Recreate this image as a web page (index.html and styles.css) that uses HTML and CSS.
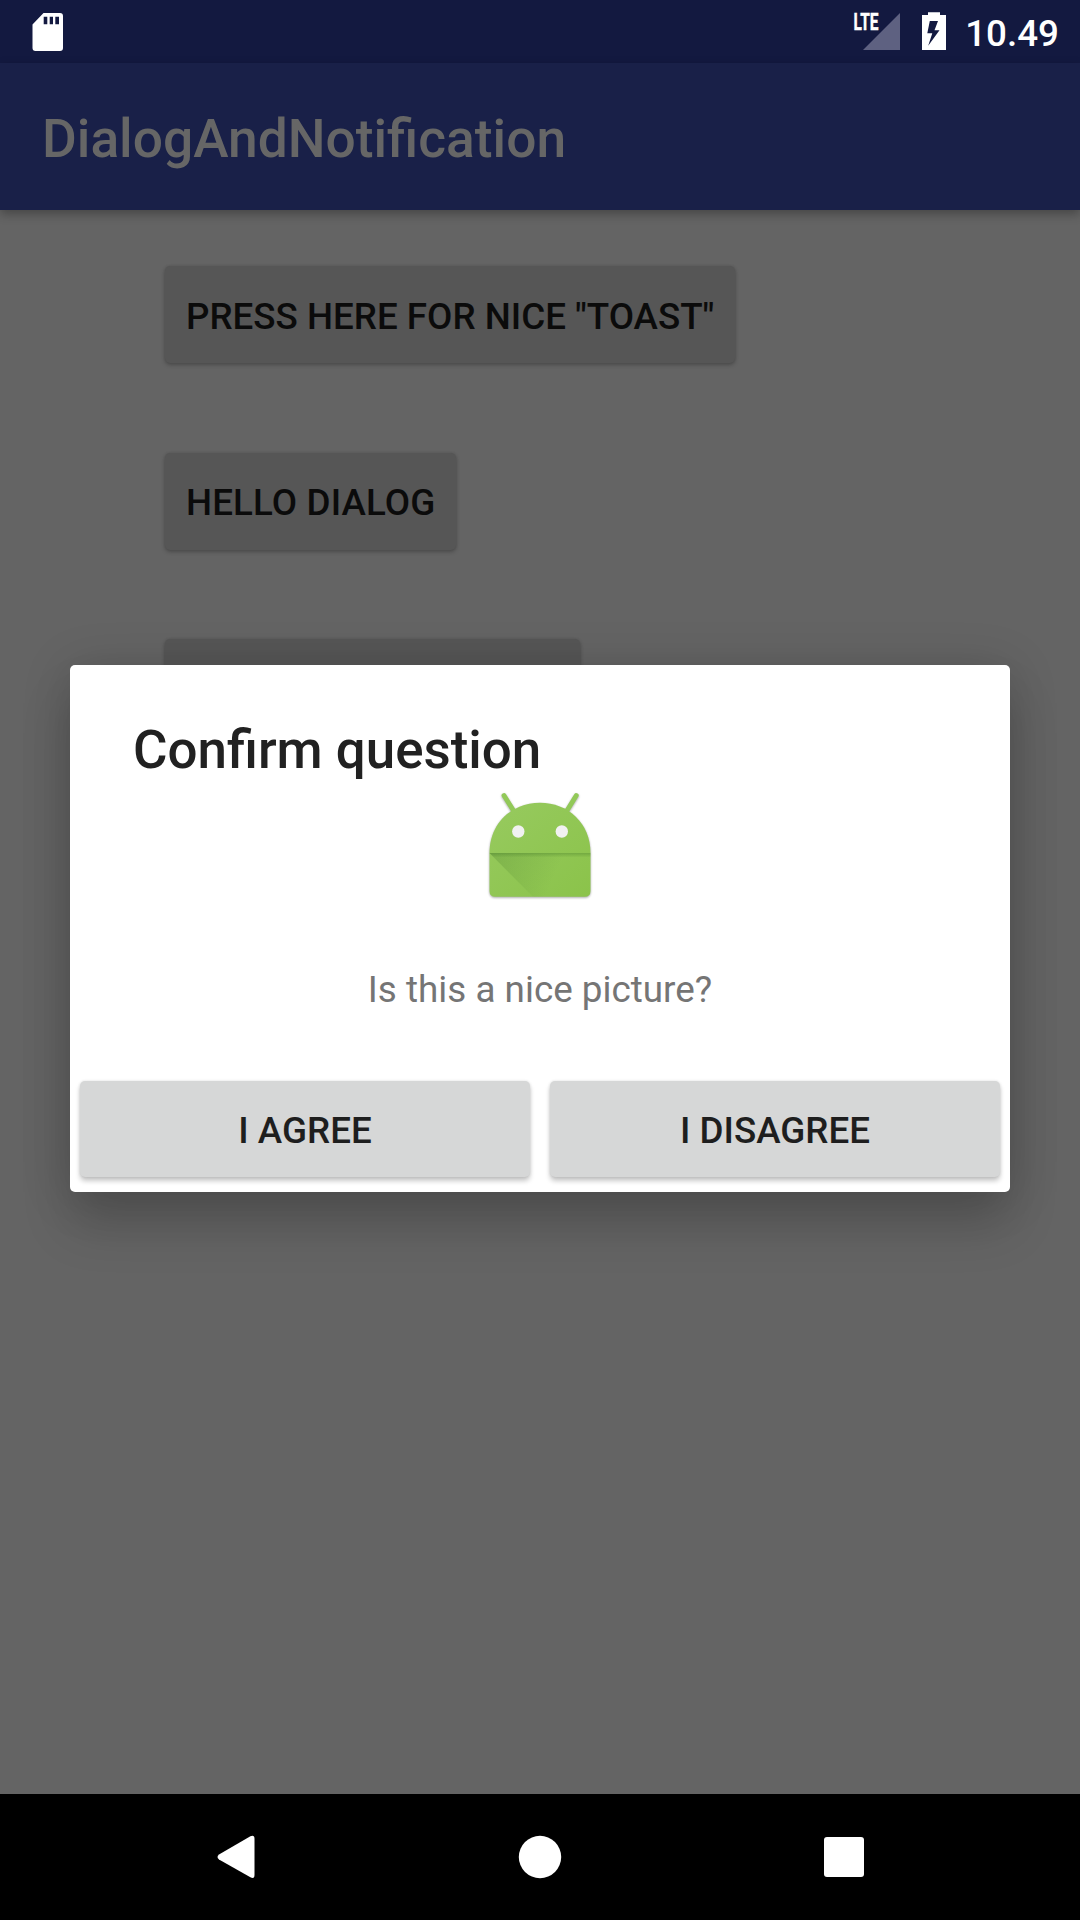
FILE: index.html
```html
<!DOCTYPE html>
<html lang="en">
<head>
<meta charset="utf-8">
<title>DialogAndNotification</title>
<link rel="stylesheet" href="styles.css">
</head>
<body>
<div class="screen">
  <header class="status-bar">
    <svg class="sd-icon" width="32" height="40" viewBox="0 0 32 40">
      <path fill="#fff" fill-rule="evenodd" d="M11.5 1H28q3 0 3 3V36q0 3-3 3H3.500q-3 0-3-3V12.500ZM11.700 4.700V12.300H15.300V4.700ZM17.700 4.700V12.300H21V4.700ZM23.300 4.700V12.300H27V4.700Z"/>
    </svg>
    <div class="status-right">
      <svg class="signal-icon" width="50" height="40" viewBox="0 0 50 40">
        <path fill="#5e6181" d="M13 38L50 1V38Z"/>
        <text class="lte" x="3.500" y="18" textLength="25" lengthAdjust="spacingAndGlyphs">LTE</text>
      </svg>
      <svg class="battery-icon" width="24" height="40" viewBox="0 0 24 40">
        <path fill="#fff" fill-rule="evenodd" d="M6 .2H18V3H24V38H0V3H6ZM7.800 9L5.300 21.200H10.300L6.200 33.700L17.500 18.200H12.500L16 9Z"/>
      </svg>
      <time class="clock">10.49</time>
    </div>
  </header>
  <div class="app-bar"><h1 class="app-title">DialogAndNotification</h1></div>
  <main class="content">
    <button class="button dim">PRESS HERE FOR NICE "TOAST"</button>
    <button class="button dim hello">HELLO DIALOG</button>
    <button class="button dim third" aria-label="Custom dialog"></button>
  </main>
  <nav class="nav-bar">
    <svg class="nav-icon" width="44" height="44" viewBox="0 0 44 44"><path fill="#fff" d="M36.400 1.300Q40.500-.5 40.500 4V40Q40.500 44.500 36.400 42.300L5 24.500Q2 22 5 19.500Z"/></svg>
    <svg class="nav-icon" width="44" height="44" viewBox="0 0 44 44"><circle cx="22" cy="22" r="21.200" fill="#fff"/></svg>
    <svg class="nav-icon" width="44" height="44" viewBox="0 0 44 44"><rect x="2" y="2" width="40" height="40" rx="3" fill="#fff"/></svg>
  </nav>
  <section class="dialog" role="dialog">
    <h2 class="dialog-title">Confirm question</h2>
    <svg class="robot" width="126" height="126" viewBox="0 0 126 126">
      <defs>
        <linearGradient id="skin" x1="0" y1="0" x2="1" y2="1"><stop offset="0" stop-color="#97ca5f"/><stop offset="1" stop-color="#8bc34a"/></linearGradient>
        <linearGradient id="fold" gradientUnits="userSpaceOnUse" x1="14" y1="67" x2="76" y2="94"><stop offset="0" stop-color="#33691e" stop-opacity=".22"/><stop offset="1" stop-color="#33691e" stop-opacity="0"/></linearGradient>
        <linearGradient id="crease" x1="0" y1="0" x2="0" y2="1"><stop offset="0" stop-color="#33691e" stop-opacity=".3"/><stop offset="1" stop-color="#33691e" stop-opacity="0"/></linearGradient>
      </defs>
      <g class="robot-body">
        <path fill="none" stroke="#92c958" stroke-width="4.800" stroke-linecap="round" d="M27 9.500L38 27M99.300 9.500L88.500 27"/>
        <path fill="url(#skin)" d="M12.500 67C12.500 37 35 16.700 63 16.700S113.500 37 113.500 67V105Q113.500 110.800 107.700 110.800H18.300Q12.500 110.800 12.500 105Z"/>
      </g>
      <path fill="url(#fold)" d="M12.500 67H113.500V105Q113.500 110.800 107.700 110.800H56Z"/>
      <path fill="url(#crease)" d="M12.500 67H113.500V71.500H17Z"/>
      <circle cx="41.300" cy="45.500" r="6.200" fill="#f1f1f1"/><circle cx="84.800" cy="45.500" r="6.200" fill="#f1f1f1"/>
    </svg>
    <p class="message">Is this a nice picture?</p>
    <div class="actions">
      <button class="button">I AGREE</button>
      <button class="button">I DISAGREE</button>
    </div>
  </section>
</div>
</body>
</html>
```
FILE: styles.css
```css
* { box-sizing: border-box; }
body { margin: 0; font-family: Roboto, "Liberation Sans", sans-serif; }
svg { display: block; }
h1, h2, p { margin: 0; font-weight: 500; }

.screen {
  position: relative;
  display: flex;
  flex-direction: column;
  width: 1080px;
  height: 1920px;
  background: #646464;
  overflow: hidden;
}

.status-bar {
  display: flex;
  flex: none;
  justify-content: space-between;
  height: 63px;
  padding: 12px 21px 0 32px;
  background: #131940;
}
.status-right { display: flex; }
.signal-icon { overflow: visible; }
.battery-icon { margin-left: 22px; }
.lte { font: 700 23px Roboto, sans-serif; fill: #fff; stroke: #fff; stroke-width: .4px; }
.clock {
  margin-left: 19px;
  color: #fff;
  font-size: 36.75px;
  font-weight: 500;
  line-height: 43px;
}

.app-bar {
  display: flex;
  flex: none;
  align-items: center;
  height: 147px;
  padding: 5px 0 0 42px;
  background: #192048;
  box-shadow: 0 4px 10px rgba(0, 0, 0, .3);
}
.app-title { color: #666; font-size: 53.3px; line-height: 62px; }

.content {
  display: flex;
  flex: 1;
  flex-direction: column;
  align-items: flex-start;
  gap: 89.5px;
  padding: 56px 0 0 165px;
}

.button {
  height: 96px;
  padding: 3px 21px 0;
  border: 0;
  border-radius: 5px;
  background: #d6d7d7;
  color: #1e1e1e;
  box-shadow: 0 4px 5px rgba(0, 0, 0, .22), 0 0 3px rgba(0, 0, 0, .12);
  font: 500 36.75px Roboto, "Liberation Sans", sans-serif;
}
.button.dim {
  height: 97px;
  padding-top: 4px;
  background: #565656;
  color: #0b0b0b;
  box-shadow: 0 2px 4px rgba(0, 0, 0, .24), 0 0 3px rgba(0, 0, 0, .1);
}
.button.hello { padding-top: 2px; letter-spacing: .12px; }
.third { width: 415px; }

.nav-bar {
  display: flex;
  flex: none;
  align-items: center;
  justify-content: center;
  gap: 260px;
  height: 126px;
  background: #000;
}

.dialog {
  position: absolute;
  top: 665px;
  left: 70px;
  display: flex;
  flex-direction: column;
  width: 940px;
  height: 527px;
  padding: 54px 10px 15px;
  border-radius: 5px;
  background: #fff;
  box-shadow: 0 34px 50px rgba(0, 0, 0, .16), 0 4px 50px rgba(0, 0, 0, .16);
}
.dialog-title { padding-left: 53px; color: #212121; font-size: 52.9px; line-height: 62px; }
.robot { align-self: center; margin-top: 5px; }
.robot-body { filter: drop-shadow(0 1.5px 1.2px rgba(0, 0, 0, .35)); }
.message {
  margin-top: 56px;
  color: #757575;
  font-size: 36.85px;
  font-weight: 400;
  line-height: 43px;
  text-align: center;
}
.actions {
  display: grid;
  grid-template-columns: 1fr 1fr;
  gap: 20px;
  margin-top: auto;
}
```
